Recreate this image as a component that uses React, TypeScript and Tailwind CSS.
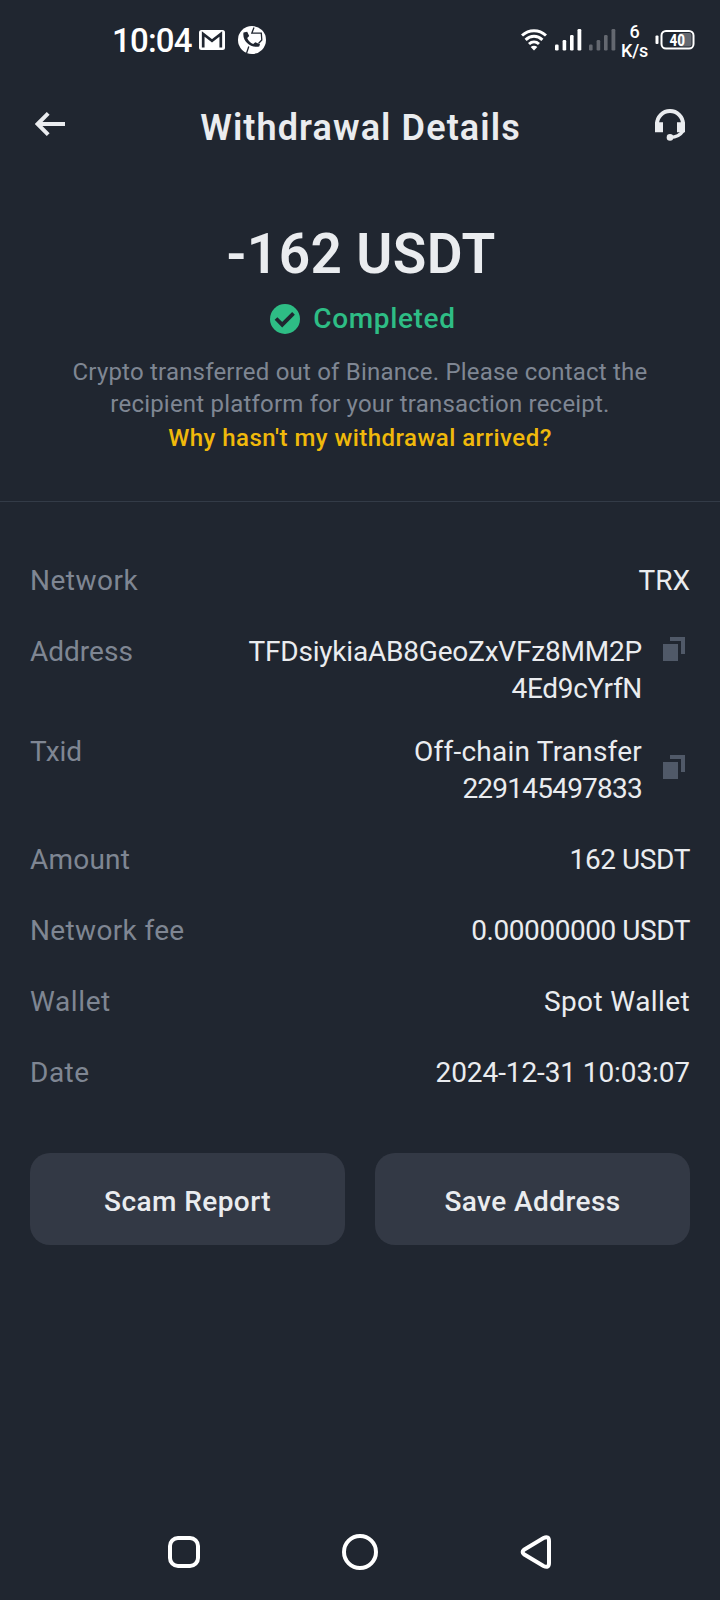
import { ReactNode } from "react";
import clsx from "clsx";

type DetailRow = {
  label: string;
  labelClass: string;
  lines: { text: string; className: string }[];
  copyClass?: string;
  rowClass: string;
};

const rows: DetailRow[] = [
  {
    label: "Network",
    labelClass: "tracking-[0.5px]",
    lines: [{ text: "TRX", className: "tracking-normal" }],
    rowClass: "mb-[34px]",
  },
  {
    label: "Address",
    labelClass: "tracking-normal",
    lines: [
      { text: "TFDsiykiaAB8GeoZxVFz8MM2P", className: "tracking-[-0.2px]" },
      { text: "4Ed9cYrfN", className: "tracking-[-0.3px]" },
    ],
    copyClass: "mt-1",
    rowClass: "mb-[26px]",
  },
  {
    label: "Txid",
    labelClass: "tracking-normal",
    lines: [
      { text: "Off-chain Transfer", className: "tracking-[0.22px]" },
      { text: "229145497833", className: "tracking-[-0.77px]" },
    ],
    copyClass: "mt-[22px]",
    rowClass: "mb-[34px]",
  },
  {
    label: "Amount",
    labelClass: "tracking-[0.2px]",
    lines: [{ text: "162 USDT", className: "tracking-[-0.4px]" }],
    rowClass: "mb-[34px]",
  },
  {
    label: "Network fee",
    labelClass: "tracking-[0.35px]",
    lines: [{ text: "0.00000000 USDT", className: "tracking-[-0.45px]" }],
    rowClass: "mb-[34px]",
  },
  {
    label: "Wallet",
    labelClass: "tracking-[0.6px]",
    lines: [{ text: "Spot Wallet", className: "tracking-[0.4px]" }],
    rowClass: "mb-[34px]",
  },
  {
    label: "Date",
    labelClass: "tracking-[0.5px]",
    lines: [{ text: "2024-12-31 10:03:07", className: "tracking-[-0.1px]" }],
    rowClass: "",
  },
];

function SignalBars({ className }: { className?: string }) {
  return (
    <svg width="27" height="22" viewBox="0 0 27 22" fill="currentColor" className={className}>
      <rect x="0" y="15.5" width="3.6" height="6" rx="1.2" />
      <rect x="7.6" y="11" width="3.6" height="10.5" rx="1.2" />
      <rect x="15" y="6" width="3.6" height="15.5" rx="1.2" />
      <rect x="22.5" y="0" width="3.8" height="21.5" rx="1.2" />
    </svg>
  );
}

function StatusBar() {
  return (
    <div className="flex h-20 items-center pr-[25px] pl-[112px] text-white">
      <span className="w-[87px] pt-[2px] text-[33px] font-medium tracking-[-0.8px] whitespace-nowrap">10:04</span>
      <svg width="26" height="20" viewBox="0 0 26 20">
        <rect width="26" height="20" rx="2.5" fill="#fff" />
        <path d="M4.2 17.5V4L13 10.8L21.8 4V17.5" fill="none" stroke="#202630" strokeWidth="2.7" />
      </svg>
      <svg width="28" height="28" viewBox="0 0 28 28" className="ml-[13px]">
        <circle cx="14" cy="14" r="14" fill="#fff" />
        <path
          d="M5.5 6.5L9.2 5.8L11.2 10L9.2 12C10.3 14.8 12.2 16.8 15.2 18L17.3 16.2L22 18.3L21.2 20.5C12.5 22.5 4 15 5.5 6.5Z"
          fill="#202630"
        />
        <path d="M16 1.5L13.8 7.2H23.3L23.8 14L20.5 17.5M10.8 20.5L8.6 27" fill="none" stroke="#202630" strokeWidth="1.3" />
      </svg>

      <div className="ml-auto flex items-center">
        <svg width="26" height="22" viewBox="0 0 26 22" fill="none" stroke="#fff" strokeWidth="3">
          <path d="M1 6.5C8 0 18 0 25 6.5" />
          <path d="M4.6 10.8C9.6 6.2 16.4 6.2 21.4 10.8" />
          <path d="M8 15C11 12.3 15 12.3 18 15" />
          <path d="M9.7 18L13 21.5L16.3 18C14.4 16.4 11.6 16.4 9.7 18Z" fill="#fff" stroke="none" />
        </svg>
        <SignalBars className="ml-2" />
        <SignalBars className="ml-[7px] text-[#646870]" />
        <div className="-mt-px ml-[5px] w-7 pt-[3px] pr-px text-center text-[18px] leading-[19px] font-medium tracking-[-0.3px]">
          <div>6</div>
          <div>K/s</div>
        </div>
        <svg width="40" height="20" viewBox="0 0 40 20" className="ml-[6px]">
          <rect x="0.5" y="5.5" width="3" height="8.5" rx="1" fill="#fff" />
          <rect x="24" y="3" width="12.5" height="13.5" rx="2" fill="#646870" />
          <rect x="6.5" y="1" width="32" height="17.5" rx="4.5" fill="none" stroke="#fff" strokeWidth="2" />
          <text x="22.3" y="15.5" textAnchor="middle" fill="#fff" fontSize="16.5" fontWeight="800" textLength="15.5" lengthAdjust="spacingAndGlyphs">
            40
          </text>
        </svg>
      </div>
    </div>
  );
}

function Header() {
  return (
    <header className="flex h-[90px] items-center justify-between px-[35px]">
      <svg width="30" height="24" viewBox="0 0 30 24" fill="none" stroke="currentColor" strokeWidth="4" className="-mt-[2px]">
        <path d="M30 12H3M13.2 1.4L2.6 12L13.2 22.6" />
      </svg>
      <h1 className="pt-[6px] pl-px text-[36px] leading-[44px] font-semibold tracking-[1.1px] whitespace-nowrap">
        Withdrawal Details
      </h1>
      <svg width="30" height="32" viewBox="0 0 30 32">
        <path d="M2 23V15A13 13 0 0 1 28 15V23" fill="none" stroke="currentColor" strokeWidth="4" />
        <path d="M0 13.3H8V23.3H0ZM22 13.3H30V23.3H22Z" fill="currentColor" />
        <path d="M28 22C25 26.5 20 28.3 15.5 28.5" fill="none" stroke="currentColor" strokeWidth="3.2" />
        <circle cx="15" cy="28.4" r="3.3" fill="currentColor" />
      </svg>
    </header>
  );
}

function CopyIcon({ className }: { className?: string }) {
  return (
    <svg width="22" height="24" viewBox="0 0 22 24" fill="#505968" className={className}>
      <path d="M0 7H15V24H0Z" />
      <path d="M7 0H22V17H18V4H7Z" />
    </svg>
  );
}

function ActionButton({ children }: { children: ReactNode }) {
  return (
    <button className="h-[92px] flex-1 rounded-[20px] bg-[#333945] pt-[6px] text-[28px] font-medium tracking-[0.42px]">
      {children}
    </button>
  );
}

export default function App() {
  return (
    <div className="flex h-[1600px] w-[720px] flex-col overflow-hidden bg-[#202630] font-[Roboto,sans-serif] text-[#eaecef]">
      <StatusBar />
      <Header />

      <section className="flex h-[332px] flex-col items-center border-b border-[#333b47] pt-[51px] text-center">
        <div className="pt-px pl-[2px] text-[55px] leading-[64px] font-semibold tracking-[0.4px] whitespace-nowrap">
          -162 USDT
        </div>
        <div className="mt-[14px] flex items-center gap-[13px] pl-[6px] text-[#2ebd85]">
          <svg width="30" height="30" viewBox="0 0 30 30">
            <circle cx="15" cy="15" r="15" fill="currentColor" />
            <path d="M6 14.5L12.2 20.7L23.5 9.4" fill="none" stroke="#202630" strokeWidth="3.8" />
          </svg>
          <span className="pt-px text-[28px] leading-9 font-medium tracking-[0.65px]">Completed</span>
        </div>
        <p className="mt-[19px] text-[24px] leading-8 tracking-[0.2px] whitespace-nowrap text-[#7f8693]">
          <span>Crypto transferred out of Binance. Please contact the</span>
          <br />
          <span>recipient platform for your transaction receipt.</span>
        </p>
        <a className="mt-[2px] text-[24px] leading-8 font-medium tracking-[0.47px] whitespace-nowrap text-[#f0b90b]">
          Why hasn't my withdrawal arrived?
        </a>
      </section>

      <dl className="px-[30px] pt-[60px] text-[28px] leading-[37px]">
        {rows.map((row) => (
          <div key={row.label} className={clsx("flex items-start", row.rowClass)}>
            <dt className={clsx("text-[#7f8693]", row.labelClass)}>{row.label}</dt>
            <dd className="ml-auto flex flex-col items-end whitespace-nowrap">
              {row.lines.map((line) => (
                <span key={line.text} className={line.className}>
                  {line.text}
                </span>
              ))}
            </dd>
            {row.copyClass && <CopyIcon className={clsx("mr-[5px] ml-[21px]", row.copyClass)} />}
          </div>
        ))}
      </dl>

      <div className="mt-[62px] flex gap-[30px] px-[30px]">
        <ActionButton>Scam Report</ActionButton>
        <ActionButton>Save Address</ActionButton>
      </div>

      <nav className="mt-auto flex h-24 items-center justify-between px-[168px] text-white">
        <svg width="32" height="32" viewBox="0 0 32 32" fill="none" stroke="currentColor" strokeWidth="4">
          <rect x="2" y="2" width="28" height="28" rx="8" />
        </svg>
        <svg width="36" height="36" viewBox="0 0 36 36" fill="none" stroke="currentColor" strokeWidth="4">
          <circle cx="18" cy="18" r="16" />
        </svg>
        <svg width="32" height="36" viewBox="0 0 32 36" fill="none" stroke="currentColor" strokeWidth="4">
          <path d="M4 15.7L23.5 4Q29 1.5 29 7V29Q29 34.5 23.5 32L4 20.3Q1.3 18 4 15.7Z" />
        </svg>
      </nav>
    </div>
  );
}
